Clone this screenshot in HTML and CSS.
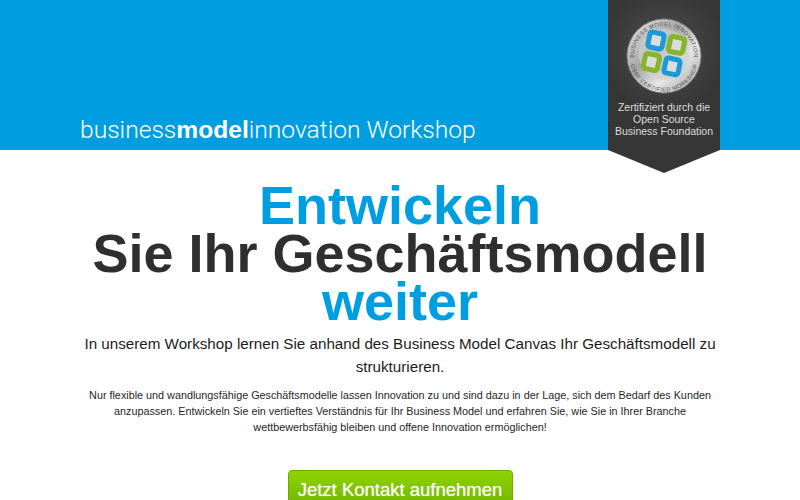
FILE: index.html
```html
<!DOCTYPE html>
<html lang="de">
<head>
<meta charset="utf-8">
<title>businessmodelinnovation Workshop</title>
<link rel="stylesheet" href="styles.css">
</head>
<body>
<header class="header">
  <div class="container header-inner">
    <div class="brand">business<b>model</b>innovation Workshop</div>
  </div>
  <aside class="badge">
    <svg class="seal" viewBox="0 0 90 90" width="76" height="76">
      <defs>
        <linearGradient id="silver" x1="0" y1="0" x2="1" y2="1">
          <stop offset="0" stop-color="#e8e8e8"/>
          <stop offset=".4" stop-color="#a6a6a6"/>
          <stop offset=".65" stop-color="#e6e6e6"/>
          <stop offset="1" stop-color="#9a9a9a"/>
        </linearGradient>
        <path id="arcTop" d="M9.500 45a35.500 35.500 0 0 1 71 0"/>
        <path id="arcBottom" d="M5 53a40.500 40.500 0 0 0 80 0"/>
      </defs>
      <circle cx="45" cy="45" r="44" fill="url(#silver)" stroke="#6e6e6e" stroke-width="1"/>
      <circle cx="45" cy="43" r="30" fill="#cfcfcf" opacity=".7"/>
      <text class="seal-text"><textPath href="#arcTop" startOffset="50%" text-anchor="middle">BUSINESS MODEL INNOVATION</textPath></text>
      <text class="seal-text"><textPath href="#arcBottom" startOffset="50%" text-anchor="middle">OSBF CERTIFIED WORKSHOP</textPath></text>
      <g transform="rotate(12 45 42)" fill="#dcdcdc" stroke-width="6">
        <rect x="24" y="20" width="17" height="18" rx="3" stroke="#1b9ad6"/>
        <rect x="49" y="20" width="17" height="18" rx="3" stroke="#86b52a"/>
        <rect x="24" y="46" width="17" height="18" rx="3" stroke="#86b52a"/>
        <rect x="49" y="46" width="17" height="18" rx="3" stroke="#1b9ad6"/>
      </g>
    </svg>
    <p class="badge-text">Zertifiziert durch die<br>Open Source<br>Business Foundation</p>
  </aside>
</header>
<main class="container content">
  <h1 class="title"><span class="accent">Entwickeln</span><br>Sie Ihr Geschäftsmodell<br><span class="accent">weiter</span></h1>
  <p class="lead">In unserem Workshop lernen Sie anhand des Business Model Canvas Ihr Geschäftsmodell zu strukturieren.</p>
  <p class="body-text">Nur flexible und wandlungsfähige Geschäftsmodelle lassen Innovation zu und sind dazu in der Lage, sich dem Bedarf des Kunden anzupassen. Entwickeln Sie ein vertieftes Verständnis für Ihr Business Model und erfahren Sie, wie Sie in Ihrer Branche wettbewerbsfähig bleiben und offene Innovation ermöglichen!</p>
  <a class="cta" href="#">Jetzt Kontakt aufnehmen</a>
</main>
</body>
</html>
```
FILE: styles.css
```css
html, body {
  margin: 0;
  height: 500px;
  overflow: hidden;
  background: #fff;
  font-family: "Liberation Sans", Arial, sans-serif;
  color: #2f2f2f;
}
.container {
  width: 640px;
  margin: 0 auto;
}
.header {
  position: relative;
  height: 150px;
  background: #009ee0;
}
.header-inner {
  height: 150px;
  display: flex;
  align-items: flex-end;
}
.brand {
  font-family: Roboto, "Liberation Sans", sans-serif;
  font-weight: 300;
  font-size: 24.600px;
  line-height: 30px;
  padding-bottom: 5px;
  color: #fff;
  white-space: nowrap;
}
.brand b {
  font-family: "Liberation Sans", sans-serif;
  font-weight: 700;
}
.badge {
  position: absolute;
  top: 0;
  left: 608px;
  width: 112px;
  height: 173px;
  box-sizing: border-box;
  padding-top: 18px;
  display: flex;
  flex-direction: column;
  align-items: center;
  background: radial-gradient(circle at 50% 50px, #505050 0, #363636 62px);
  clip-path: polygon(0 0, 100% 0, 100% 150px, 50% 100%, 0 150px);
}
.seal {
  display: block;
}
.seal-text {
  font-size: 6.600px;
  fill: #4a4a4a;
  font-family: "Liberation Sans", sans-serif;
  letter-spacing: .6px;
}
.badge-text {
  margin: 7px 0 0;
  font-size: 10.500px;
  line-height: 12px;
  text-align: center;
  color: #dedede;
  white-space: nowrap;
}
.content {
  text-align: center;
}
.title {
  margin: 31px 0 0;
  font-size: 54px;
  line-height: 48px;
  font-weight: 700;
  color: #2f2f2f;
}
.accent {
  color: #009ee0;
}
.lead {
  margin: 7px 0 0;
  font-size: 15.200px;
  line-height: 23px;
  color: #1c1c1c;
}
.body-text {
  margin: 9px 0 0;
  font-size: 10.800px;
  line-height: 16px;
  color: #262626;
}
.cta {
  display: block;
  width: 225px;
  box-sizing: border-box;
  margin: 35px auto 0;
  padding: 7px 0;
  border: 1px solid #6fa800;
  border-radius: 4px;
  background: linear-gradient(#8fd400, #6fb300);
  color: #fff;
  font-size: 18.500px;
  line-height: 24px;
  text-decoration: none;
  text-shadow: 0 0 1px rgba(255, 255, 255, .6);
}
```
